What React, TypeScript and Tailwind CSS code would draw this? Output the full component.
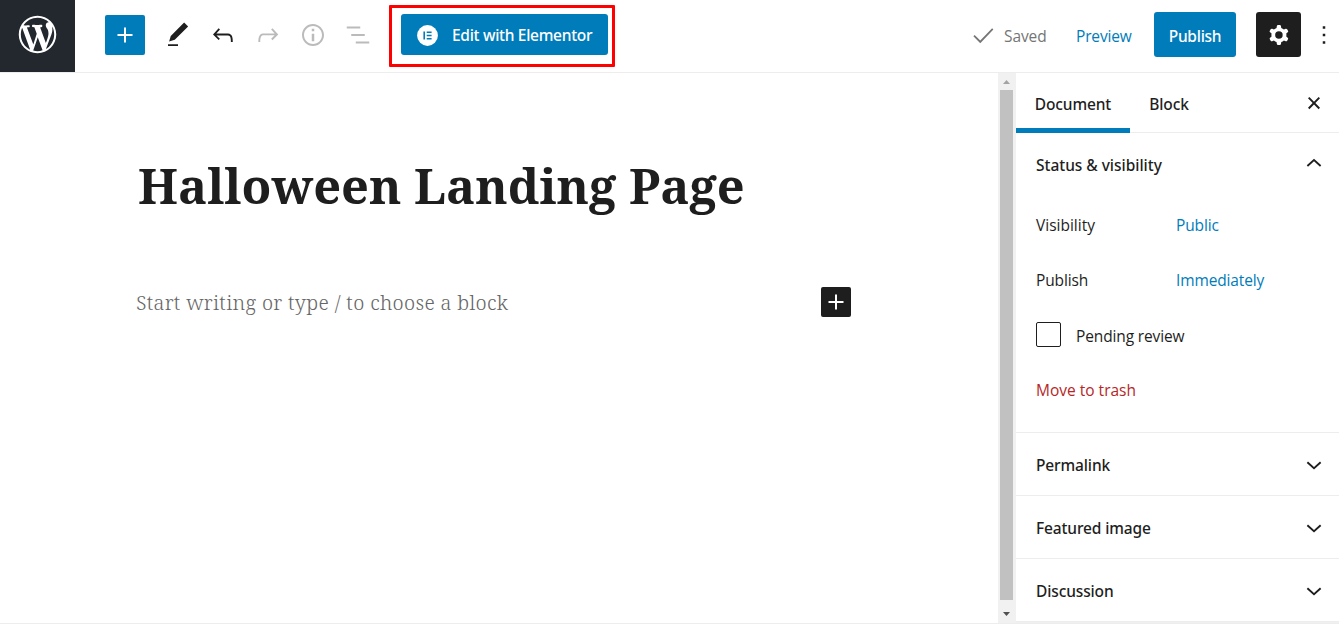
import React, { useState } from 'react';

interface IconProps {
  path: string;
  size?: number;
  className?: string;
}

const ICONS = {
  wordpress:
    'M20 10c0-5.51-4.49-10-10-10C4.48 0 0 4.49 0 10c0 5.52 4.48 10 10 10 5.51 0 10-4.48 10-10zM7.78 15.37L4.37 6.22c.55-.02 1.17-.08 1.17-.08.5-.06.44-1.13-.06-1.11 0 0-1.45.11-2.37.11-.18 0-.37 0-.58-.01C4.12 2.69 6.87 1.11 10 1.11c2.33 0 4.45.87 6.05 2.34-.68-.11-1.65.39-1.65 1.58 0 .74.45 1.36.9 2.1.35.61.55 1.36.55 2.46 0 1.49-1.4 5-1.4 5l-3.03-8.37c.54-.02.82-.17.82-.17.5-.05.44-1.25-.06-1.22 0 0-1.44.12-2.38.12-.87 0-2.33-.12-2.33-.12-.5-.03-.56 1.2-.06 1.22l.92.08 1.26 3.41zM17.41 10c.24-.64.74-1.87.43-4.25.7 1.29 1.05 2.71 1.05 4.25 0 3.29-1.73 6.24-4.4 7.78.97-2.59 1.94-5.2 2.92-7.78zM6.1 18.09C3.12 16.65 1.11 13.53 1.11 10c0-1.3.23-2.48.72-3.59C3.25 10.3 4.67 14.2 6.1 18.09zm4.03-6.63l2.58 6.98c-.86.29-1.76.45-2.71.45-.79 0-1.57-.11-2.29-.33.81-2.38 1.62-4.74 2.42-7.1z',
  plus: 'M18 11.2h-5.2V6h-1.6v5.2H6v1.6h5.2V18h1.6v-5.2H18z',
  edit: 'M20.1 5.1L16.9 2 6.2 12.7l-1.3 4.4 4.5-1.3L20.1 5.1zM4 20.8h8v-1.5H4v1.5z',
  undo: 'M18.3 11.7c-.6-.6-1.4-.9-2.3-.9H6.7l2.9-3.3-1.1-1-4.5 5L8.5 16l1-1-2.7-2.7H16c.5 0 .9.2 1.3.5 1 1 1 3.4 1 4.5v.3h1.5v-.2c0-1.5 0-4.3-1.5-5.7z',
  redo: 'M15.6 6.5l-1.1 1 2.9 3.3H8c-.9 0-1.7.3-2.3.9-1.4 1.5-1.4 4.2-1.4 5.6v.2h1.5v-.3c0-1.1 0-3.5 1-4.5.3-.3.7-.5 1.3-.5h9.2L14.5 15l1.1 1.1 4.6-4.6-4.6-5z',
  info: 'M12 3.2c-4.8 0-8.8 3.9-8.8 8.8 0 4.8 3.9 8.8 8.8 8.8 4.8 0 8.8-3.9 8.8-8.8 0-4.8-4-8.8-8.8-8.8zm0 16c-4 0-7.2-3.3-7.2-7.2C4.8 8 8 4.8 12 4.8s7.2 3.3 7.2 7.2c0 4-3.2 7.2-7.2 7.2zM11 17h2v-6h-2v6zm0-8h2V7h-2v2z',
  outline: 'M13.8 5.2H3v1.5h10.8V5.2zm-3.6 12v1.5H21v-1.5H10.2zm7.2-6H6.6v1.5h10.8v-1.5z',
  check: 'M9 18.6L3.5 13l1-1L9 16.4l9.5-9.9 1 1z',
  cog: 'M10.289 4.836A1 1 0 0111.275 4h1.306a1 1 0 01.987.836l.244 1.466c.787.26 1.503.679 2.108 1.218l1.393-.522a1 1 0 011.216.437l.653 1.13a1 1 0 01-.23 1.273l-1.148.944a6.025 6.025 0 010 2.435l1.149.946a1 1 0 01.23 1.272l-.653 1.13a1 1 0 01-1.216.437l-1.394-.522c-.605.54-1.32.958-2.108 1.218l-.244 1.466a1 1 0 01-.987.836h-1.306a1 1 0 01-.986-.836l-.244-1.466a5.995 5.995 0 01-2.108-1.218l-1.394.522a1 1 0 01-1.217-.436l-.653-1.131a1 1 0 01.23-1.272l1.149-.946a6.026 6.026 0 010-2.435l-1.148-.944a1 1 0 01-.23-1.272l.653-1.131a1 1 0 011.217-.437l1.393.522a5.994 5.994 0 012.108-1.218l.244-1.466zM14.929 12a3 3 0 11-6 0 3 3 0 016 0z',
  more: 'M13 19h-2v-2h2v2zm0-6h-2v-2h2v2zm0-6h-2V5h2v2z',
  close: 'M16.8 8.2l-1.1-1.1L12 10.9 8.3 7.1 7.2 8.2l3.7 3.8-3.7 3.8 1.1 1.1 3.7-3.8 3.7 3.8 1.1-1.1-3.7-3.8z',
  up: 'M6.2 12.9L12 7.7l5.8 5.2-1 1.2-4.8-4.3-4.8 4.3z',
  down: 'M17.8 11.2L12 16.4l-5.8-5.2 1-1.2 4.8 4.3 4.8-4.3z',
};

const Icon: React.FC<IconProps> = ({ path, size = 30, className = '' }) => (
  <svg
    width={size}
    height={size}
    viewBox="0 0 24 24"
    fill="currentColor"
    fillRule="evenodd"
    className={`shrink-0 ${className}`}
  >
    <path d={path} />
  </svg>
);

const Header: React.FC = () => (
  <header className="flex h-[73px] shrink-0 border-b border-[#ededed]">
    <a className="flex w-[75px] h-[72px] shrink-0 items-center justify-center bg-[#23282e] pb-[3px] text-white">
      <svg width="45" height="45" viewBox="-2 -2 24 24" fill="currentColor">
        <path d={ICONS.wordpress} />
      </svg>
    </a>

    <div className="flex h-[70px] items-center pl-[30px]">
      <button className="flex size-10 items-center justify-center rounded-[2px] bg-[#007cba] text-white">
        <Icon path={ICONS.plus} />
      </button>
      <div className="ml-[18px] flex gap-[15px]">
        <button><Icon path={ICONS.edit} /></button>
        <button><Icon path={ICONS.undo} /></button>
        <button className="text-[#bbb]"><Icon path={ICONS.redo} /></button>
        <button className="text-[#bbb]"><Icon path={ICONS.info} /></button>
        <button className="text-[#bbb]"><Icon path={ICONS.outline} /></button>
      </div>
      <div className="relative mb-[2px] ml-7 h-[41px]">
        <button className="flex h-full w-[207px] items-center rounded-[3px] bg-[#007cba] pl-4 text-white">
          <svg width="21" height="21" viewBox="0 0 21 21" className="mt-[2px] shrink-0">
            <circle cx="10.5" cy="10.5" r="10.4" fill="#fff" />
            <path d="M6.4 6.4H8v8.2H6.4zM9.7 6.4h4.9V8H9.7zM9.7 9.7h4.9v1.6H9.7zM9.7 13h4.9v1.6H9.7z" fill="#007cba" />
          </svg>
          <span className="ml-[14px] mt-[4px] whitespace-nowrap font-['Noto_Sans'] text-[15.5px] font-medium tracking-[-0.29px]">Edit with Elementor</span>
        </button>
        {/* highlight frame around the button */}
        <div className="pointer-events-none absolute -top-[9px] -right-[7px] -bottom-3 -left-3 rounded-[1px] border-3 border-[#fe0000]" />
      </div>
    </div>

    <div className="ml-auto flex h-[69px] items-center">
      <Icon path={ICONS.check} className="text-[#757575]" />
      <span className="ml-[5px] mt-[4px] w-[72px] text-[15.5px] tracking-[-0.1px] text-[#757575]">Saved</span>
      <a className="mt-[4px] w-[78px] text-[15.5px] tracking-[-0.15px] text-[#007cba]">Preview</a>
      <button className="mr-5 flex h-[45px] w-[82px] items-center justify-center rounded-[3px] bg-[#007cba] pt-[4px] font-['Noto_Sans'] text-[15.5px] font-medium tracking-[-0.25px] text-white">
        Publish
      </button>
      <button className="flex size-[45px] items-center justify-center rounded-[3px] bg-[#1e1e1e] pt-px text-white">
        <Icon path={ICONS.cog} />
      </button>
      <button className="mt-px ml-2"><Icon path={ICONS.more} /></button>
    </div>
  </header>
);

const Scrollbar: React.FC = () => (
  <div className="flex w-[18px] shrink-0 flex-col bg-[#f1f1f1] pl-[2px]">
    <div className="flex h-[17px] w-[13px] items-center justify-center">
      <svg width="7" height="4" viewBox="0 0 7 4" fill="#a3a3a3"><path d="M3.5 0L7 4H0z" /></svg>
    </div>
    <div className="h-[510px] w-[13px] bg-[#c1c1c1]" />
    <div className="flex grow w-[13px] items-center justify-center pt-[5px]">
      <svg width="7" height="4" viewBox="0 0 7 4" fill="#505050"><path d="M3.5 4L7 0H0z" /></svg>
    </div>
  </div>
);

const Editor: React.FC = () => (
  <main className="grow overflow-hidden pl-[137px] font-['Noto_Serif','DejaVu_Serif_Condensed','DejaVu_Serif',serif]">
    <h1 className="ml-px mt-[77px] h-[70px] whitespace-nowrap text-[48.75px] leading-[70px] font-bold">
      Halloween Landing Page
    </h1>
    <div className="mt-[67px] flex h-[30px] w-[714px] items-center justify-between">
      <p className="mt-[2px] -ml-px whitespace-nowrap text-[20px] font-light tracking-[0.34px] text-[#666]">Start writing or type / to choose a block</p>
      <button className="flex size-[30px] items-center justify-center rounded-[2px] bg-[#1e1e1e] text-white">
        <Icon path={ICONS.plus} />
      </button>
    </div>
  </main>
);

const Sidebar: React.FC = () => {
  const [tab, setTab] = useState('Document');

  return (
    <aside className="flex w-[323px] shrink-0 flex-col text-[15.5px] tracking-[-0.13px]">
      <div className="flex h-[60px] border-b border-[#ededed]">
        {['Document', 'Block'].map((name) => (
          <button
            key={name}
            onClick={() => setTab(name)}
            className={`h-[60px] border-b-5 pt-[8px] font-['Noto_Sans'] font-medium ${
              tab === name ? 'w-[114px] border-[#007cba]' : 'w-[78px] border-transparent'
            }`}
          >
            {name}
          </button>
        ))}
        <button className="ml-auto mr-[10px]"><Icon path={ICONS.close} /></button>
      </div>

      <section className="h-[300px] border-b border-[#ededed] pl-5">
        <div className="flex h-[62px] items-center justify-between pr-[10px]">
          <h2 className="mt-[3px] font-['Noto_Sans'] font-medium tracking-[-0.03px]">Status &amp; visibility</h2>
          <Icon path={ICONS.up} />
        </div>
        <div className="mt-[11px] flex h-10 items-center">
          <span className="w-[140px] tracking-normal">Visibility</span>
          <a className="text-[#007cba]">Public</a>
        </div>
        <div className="mt-[15px] flex h-10 items-center">
          <span className="w-[140px]">Publish</span>
          <a className="text-[#007cba]">Immediately</a>
        </div>
        <label className="mt-[21px] flex h-[25px] items-center">
          <span className="size-[25px] rounded-[2px] border border-[#1e1e1e]" />
          <span className="ml-[15px] mt-[5px]">Pending review</span>
        </label>
        <a className="mt-[31px] block h-6 leading-6 tracking-normal text-[#b52727]">Move to trash</a>
      </section>

      {['Permalink', 'Featured image', 'Discussion'].map((title) => (
        <section key={title} className="flex h-[63px] items-center justify-between border-b border-[#ededed] pl-5 pr-[10px]">
          <h2 className="mt-[3px] font-['Noto_Sans'] font-medium">{title}</h2>
          <Icon path={ICONS.down} />
        </section>
      ))}
      <div className="grow bg-[#f0f0f0]" />
    </aside>
  );
};

const App: React.FC = () => (
  <div className="flex h-[625px] w-[1339px] flex-col overflow-hidden bg-white font-['Segoe_UI','Open_Sans',sans-serif] text-[#1e1e1e]">
    <Header />
    <div className="flex h-[551px] border-b border-[#ededed]">
      <Editor />
      <Scrollbar />
      <Sidebar />
    </div>
  </div>
);

export default App;
